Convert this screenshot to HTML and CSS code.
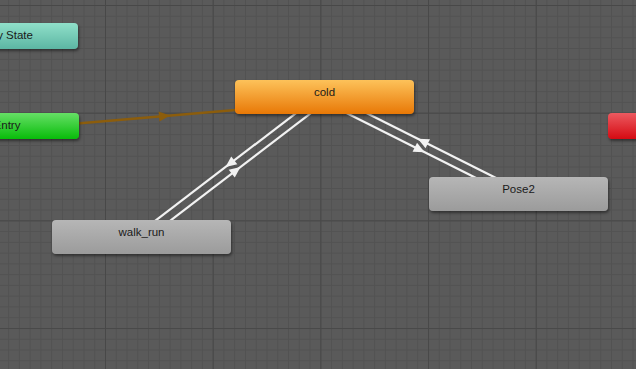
FILE: index.html
```html
<!DOCTYPE html>
<html lang="en">
<head>
    <meta charset="UTF-8">
    <title>Animator</title>
    <link rel="stylesheet" href="styles.css">
</head>
<body>
    <div class="graph">
        <!-- transitions, drawn under the states -->
        <svg class="links" width="636" height="369" viewBox="0 0 636 369">
            <line class="entry-link" x1="10" y1="129.3" x2="325" y2="102.3" />
            <polygon class="entry-arrow" points="6,0 -5,-5 -5,5" transform="translate(164 116) rotate(-4.9)" />

            <line class="link" x1="321.8" y1="93.4" x2="138.8" y2="233.4" />
            <line class="link" x1="327.2" y1="100.6" x2="144.2" y2="240.6" />
            <polygon class="arrow" points="6,0 -5,-5 -5,5" transform="translate(230.3 163.4) rotate(142.6)" />
            <polygon class="arrow" points="6,0 -5,-5 -5,5" transform="translate(235.7 170.6) rotate(-37.4)" />

            <line class="link" x1="322.5" y1="101" x2="516" y2="198" />
            <line class="link" x1="326.5" y1="93" x2="520" y2="190" />
            <polygon class="arrow" points="6,0 -5,-5 -5,5" transform="translate(419.3 149.5) rotate(26.6)" />
            <polygon class="arrow" points="6,0 -5,-5 -5,5" transform="translate(423.3 141.5) rotate(206.6)" />
        </svg>

        <div class="state small any" style="left:-62px; top:23px; width:140px;">Any State</div>
        <div class="state small entry" style="left:-65px; top:113px; width:144px;">Entry</div>
        <div class="state small exit" style="left:608px; top:113px;">Exit</div>

        <div class="state default" style="left:235px; top:80px;">cold</div>
        <div class="state" style="left:52px; top:220px;">walk_run</div>
        <div class="state" style="left:429px; top:177px;">Pose2</div>
    </div>
</body>
</html>
```

FILE: styles.css
```css
* {
    margin: 0;
    padding: 0;
    box-sizing: border-box;
}

body {
    background: #5a5a5a;
    overflow: hidden;
}

.graph {
    position: relative;
    width: 636px;
    height: 369px;
    overflow: hidden;
    background-color: #5a5a5a;
    background-image:
        linear-gradient(90deg, #484848 1px, transparent 1px),
        linear-gradient(#484848 1px, transparent 1px),
        linear-gradient(90deg, #525252 1px, transparent 1px),
        linear-gradient(#525252 1px, transparent 1px);
    background-size:
        107.7px 107.7px,
        107.7px 107.7px,
        10.77px 10.77px,
        10.77px 10.77px;
    background-position: 105px 5px;
}

.links {
    position: absolute;
    left: 0;
    top: 0;
}

.link {
    stroke: #f2f2f2;
    stroke-width: 2.2;
}

.arrow {
    fill: #f2f2f2;
}

.entry-link {
    stroke: #8c5d0c;
    stroke-width: 2.4;
}

.entry-arrow {
    fill: #8c5d0c;
}

/* state nodes */
.state {
    position: absolute;
    width: 179px;
    height: 34px;
    padding-top: 6px;
    border-radius: 4px;
    text-align: center;
    font-family: "Liberation Sans", Arial, sans-serif;
    font-size: 11.5px;
    line-height: 13px;
    color: #1a1a1a;
    background: linear-gradient(#b6b6b6, #9b9b9b);
    box-shadow: 1px 2px 3px rgba(0, 0, 0, 0.45);
}

.state.small {
    width: 148px;
    height: 26px;
}

.state.default {
    background: linear-gradient(#fdc25a, #e87806);
}

.state.any {
    background: linear-gradient(#90e0ca, #5cb6a3);
}

.state.entry {
    background: linear-gradient(#66e066, #08bc0a);
}

.state.exit {
    background: linear-gradient(#ec5a60, #d50a12);
}
```
